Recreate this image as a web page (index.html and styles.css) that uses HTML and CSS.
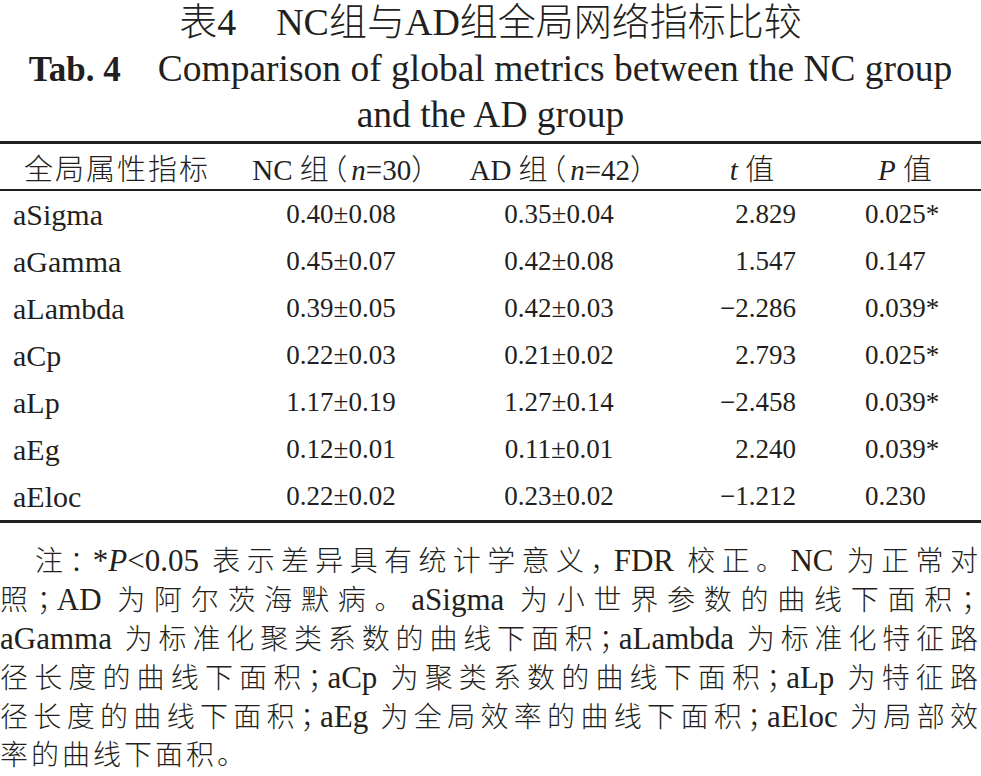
FILE: index.html
```html
<!DOCTYPE html>
<html lang="zh-CN">
<head>
<meta charset="utf-8">
<title>表4 NC组与AD组全局网络指标比较</title>
<link rel="stylesheet" href="styles.css">
</head>
<body>
<div class="page">
  <header class="caption">
    <div class="cap-cn"><span class="cap-num">表4</span>NC组与AD组全局网络指标比较</div>
    <div class="cap-en"><span class="cap-tab">Tab. 4</span>Comparison of global metrics between the NC group</div>
    <div class="cap-en">and the AD group</div>
  </header>

  <section class="data">
    <div class="row head">
      <div class="cell c1 h1">全局属性指标</div>
      <div class="cell c2">NC 组<span class="pu">（</span><i>n</i>=30<span class="pu">）</span></div>
      <div class="cell c3">AD 组<span class="pu">（</span><i>n</i>=42<span class="pu">）</span></div>
      <div class="cell c4h"><i>t</i> 值</div>
      <div class="cell c5h"><i>P</i> 值</div>
    </div>
    <div class="body">
      <div class="row">
        <div class="cell c1">aSigma</div>
        <div class="cell c2">0.40±0.08</div>
        <div class="cell c3">0.35±0.04</div>
        <div class="cell c4">2.829</div>
        <div class="cell c5">0.025*</div>
      </div>
      <div class="row">
        <div class="cell c1">aGamma</div>
        <div class="cell c2">0.45±0.07</div>
        <div class="cell c3">0.42±0.08</div>
        <div class="cell c4">1.547</div>
        <div class="cell c5">0.147</div>
      </div>
      <div class="row">
        <div class="cell c1">aLambda</div>
        <div class="cell c2">0.39±0.05</div>
        <div class="cell c3">0.42±0.03</div>
        <div class="cell c4">−2.286</div>
        <div class="cell c5">0.039*</div>
      </div>
      <div class="row">
        <div class="cell c1">aCp</div>
        <div class="cell c2">0.22±0.03</div>
        <div class="cell c3">0.21±0.02</div>
        <div class="cell c4">2.793</div>
        <div class="cell c5">0.025*</div>
      </div>
      <div class="row">
        <div class="cell c1">aLp</div>
        <div class="cell c2">1.17±0.19</div>
        <div class="cell c3">1.27±0.14</div>
        <div class="cell c4">−2.458</div>
        <div class="cell c5">0.039*</div>
      </div>
      <div class="row">
        <div class="cell c1">aEg</div>
        <div class="cell c2">0.12±0.01</div>
        <div class="cell c3">0.11±0.01</div>
        <div class="cell c4">2.240</div>
        <div class="cell c5">0.039*</div>
      </div>
      <div class="row">
        <div class="cell c1">aEloc</div>
        <div class="cell c2">0.22±0.02</div>
        <div class="cell c3">0.23±0.02</div>
        <div class="cell c4">−1.212</div>
        <div class="cell c5">0.230</div>
      </div>
    </div>
  </section>

  <div class="note">
    <div class="nl first">注<span class="pu">：</span><span class="lt">*<i>P</i>&lt;0.05</span> 表示差异具有统计学意义<span class="pu">，</span><span class="lt">FDR</span> 校正。<span class="lt">NC</span> 为正常对</div>
    <div class="nl">照<span class="pu">；</span><span class="lt">AD</span> 为阿尔茨海默病。<span class="lt">aSigma</span> 为小世界参数的曲线下面积<span class="pu">；</span></div>
    <div class="nl"><span class="lt">aGamma</span> 为标准化聚类系数的曲线下面积<span class="pu">；</span><span class="lt">aLambda</span> 为标准化特征路</div>
    <div class="nl">径长度的曲线下面积<span class="pu">；</span><span class="lt">aCp</span> 为聚类系数的曲线下面积<span class="pu">；</span><span class="lt">aLp</span> 为特征路</div>
    <div class="nl">径长度的曲线下面积<span class="pu">；</span><span class="lt">aEg</span> 为全局效率的曲线下面积<span class="pu">；</span><span class="lt">aEloc</span> 为局部效</div>
    <div class="nl last">率的曲线下面积。</div>
  </div>
</div>
</body>
</html>
```

FILE: styles.css
```css
html, body {
  margin: 0;
  padding: 0;
  background: #ffffff;
}

body {
  color: #231f20;
  font-family: "Liberation Serif", "Noto Sans CJK SC", serif;
}

.page {
  width: 981px;
}

/* ---------- caption ---------- */
.caption {
  margin-bottom: 3px;
  text-align: center;
}

.cap-cn {
  height: 46px;
  line-height: 44px;
  font-size: 38px;
  font-weight: 300;
}

.cap-num {
  margin-right: 40px;
}

.cap-en {
  height: 46px;
  line-height: 46px;
  font-size: 37.5px;
  white-space: nowrap;
}

.cap-tab {
  font-size: 35px;
  font-weight: bold;
  margin-right: 37px;
}

/* ---------- table ---------- */
.data {
  width: 981px;
}

.row {
  display: grid;
  grid-template-columns: 232px 218px 218px 168px 145px;
  align-items: center;
  height: 47px;
}

.head {
  height: 45px;
  border-top: 3px solid #231f20;
  border-bottom: 2px solid #231f20;
  font-size: 29px;
  font-weight: 300;
}

.body {
  border-bottom: 3px solid #231f20;
}

.cell {
  white-space: nowrap;
}

.pu {
  font-feature-settings: "halt";
}

.head .pu {
  letter-spacing: 4px;
}

.head .pu:first-child,
.c2 .pu:nth-of-type(1),
.c3 .pu:nth-of-type(1) {
  margin-left: 4px;
}

.c1 {
  padding-left: 13px;
  font-size: 30px;
}

.head .h1 {
  padding-left: 0;
  font-size: 29px;
  text-align: center;
  letter-spacing: 2px;
  text-indent: 2px;
}

.c2,
.c3 {
  text-align: center;
  font-size: 27px;
}

.head .c2,
.head .c3 {
  font-size: 29px;
}

.c4 {
  text-align: right;
  padding-right: 40px;
  font-size: 27px;
}

.c5 {
  text-align: left;
  padding-left: 29px;
  font-size: 27px;
}

.c4h {
  text-align: center;
}

.c5h {
  text-align: center;
  padding-right: 7px;
}

/* ---------- note ---------- */
.note {
  margin-top: 19px;
  font-size: 28px;
  line-height: 38px;
  letter-spacing: 3px;
  font-weight: 300;
}

.note .pu {
  letter-spacing: 6px;
}

.note .lt {
  font-size: 31px;
  letter-spacing: 0;
  font-weight: normal;
}

.nl {
  text-align: justify;
  text-align-last: justify;
}

.nl.first {
  text-indent: 35px;
}

.nl.last {
  text-align: left;
  text-align-last: left;
}
```
